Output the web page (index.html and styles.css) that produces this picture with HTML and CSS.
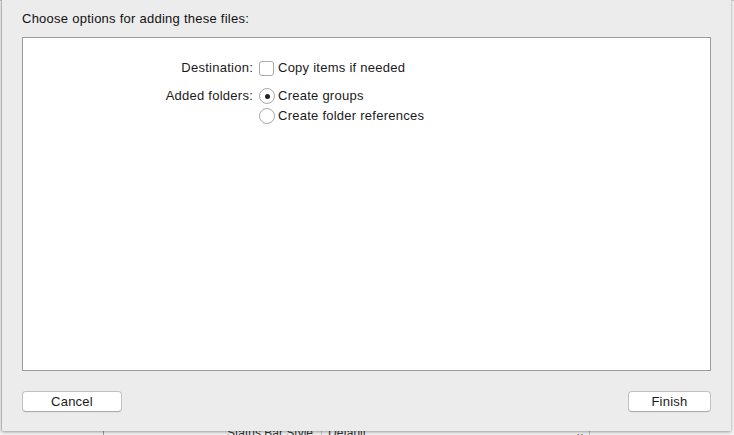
FILE: index.html
```html
<!DOCTYPE html>
<html>
<head>
<meta charset="utf-8">
<link rel="stylesheet" href="styles.css">
</head>
<body>
<div class="backdrop">
  <div class="under-row">
    <span class="under-label">Status Bar Style</span>
    <span class="under-value">Default</span>
    <span class="under-arrow">⌄</span>
  </div>
</div>
<div class="sheet">
  <div class="title">Choose options for adding these files:</div>
  <div class="panel">
    <div class="form">
      <div class="label">Destination:</div>
      <div class="options">
        <label class="opt"><span class="checkbox"></span>Copy items if needed</label>
      </div>
      <div class="label">Added folders:</div>
      <div class="options">
        <label class="opt"><span class="radio on"></span>Create groups</label>
        <label class="opt"><span class="radio"></span>Create folder references</label>
      </div>
    </div>
  </div>
  <div class="buttons">
    <button class="btn cancel">Cancel</button>
    <button class="btn finish">Finish</button>
  </div>
</div>
</body>
</html>
```
FILE: styles.css
```css
html, body {
  margin: 0;
  padding: 0;
}
body {
  width: 734px;
  height: 435px;
  overflow: hidden;
  background: #f4f4f4;
  font-family: "Helvetica Neue", "Liberation Sans", Arial, sans-serif;
  font-size: 13px;
  letter-spacing: 0.25px;
  color: #1a1a1a;
  position: relative;
}
.backdrop {
  position: absolute;
  left: 0;
  top: 0;
  width: 734px;
  height: 435px;
  background: #f2f2f2;
  border-top: 1px solid #c8c8c8;
  box-sizing: border-box;
}
.under-row {
  position: absolute;
  left: 103px;
  top: 425px;
  width: 485px;
  height: 20px;
  border-left: 1px solid #9c9c9c;
  border-right: 1px solid #c0c0c0;
  display: flex;
  align-items: flex-start;
  font-size: 12px;
  letter-spacing: 0;
  color: #333;
}
.under-label {
  margin-left: 123px;
}
.under-value {
  margin-left: 8px;
  padding-left: 6px;
  border-left: 1px solid #c8c8c8;
}
.under-arrow {
  margin-left: auto;
  margin-right: 4px;
}
.sheet {
  position: absolute;
  left: 2px;
  top: 0;
  width: 729px;
  height: 431px;
  background: #ececec;
  box-shadow: 0 1px 3px rgba(0,0,0,0.35), -1px 0 1px rgba(0,0,0,0.15);
  display: flex;
  flex-direction: column;
  padding: 0 20px 0 20px;
  box-sizing: border-box;
}
.title {
  height: 37px;
  line-height: 38px;
  box-sizing: border-box;
  color: #111;
}
.panel {
  height: 334px;
  background: #ffffff;
  border: 1px solid #9b9b9b;
  box-sizing: border-box;
}
.form {
  display: grid;
  grid-template-columns: 230px auto;
  column-gap: 6px;
  row-gap: 12px;
  padding-top: 22px;
}
.label {
  text-align: right;
  line-height: 16px;
  color: #1a1a1a;
}
.options {
  display: flex;
  flex-direction: column;
  gap: 4px;
}
.opt {
  display: flex;
  align-items: center;
  height: 16px;
  line-height: 16px;
  color: #1a1a1a;
}
.checkbox {
  width: 13px;
  height: 13px;
  border: 1px solid #a9a9a9;
  border-radius: 3px;
  background: #fff;
  margin-right: 4px;
  box-sizing: content-box;
}
.radio {
  width: 14px;
  height: 14px;
  border: 1px solid #a9a9a9;
  border-radius: 50%;
  background: #fff;
  margin-right: 3px;
  display: flex;
  align-items: center;
  justify-content: center;
}
.radio.on::after {
  content: "";
  width: 5px;
  height: 5px;
  border-radius: 50%;
  background: #222;
}
.buttons {
  display: flex;
  justify-content: space-between;
  padding-top: 20px;
}
.btn {
  height: 21px;
  background: #ffffff;
  border: 1px solid #c2c2c2;
  border-bottom-color: #adadad;
  border-radius: 4px;
  font-family: inherit;
  font-size: 13px;
  letter-spacing: 0.25px;
  color: #1a1a1a;
  padding: 0;
  line-height: 19px;
  box-shadow: 0 0.5px 0.5px rgba(0,0,0,0.08);
}
.cancel {
  width: 100px;
}
.finish {
  width: 83px;
}
```
